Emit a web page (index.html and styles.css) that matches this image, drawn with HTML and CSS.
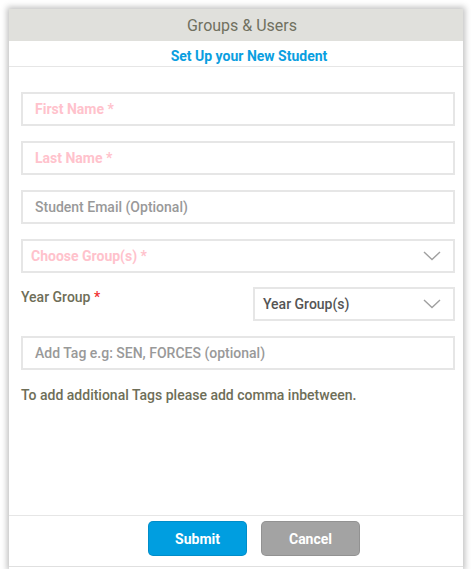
FILE: index.html
```html
<!DOCTYPE html>
<html>
<head>
<meta charset="utf-8">
<link rel="stylesheet" href="styles.css">
</head>
<body>
<div class="modal">
  <div class="header">Groups &amp; Users</div>
  <div class="subtitle">Set Up your New Student</div>
  <div class="body">
    <div class="field req">First Name *</div>
    <div class="field req">Last Name *</div>
    <div class="field">Student Email (Optional)</div>
    <div class="field select req narrowpad">Choose Group(s) *
      <svg class="chev" width="18" height="10" viewBox="0 0 18 10"><path d="M1 1 L9 8.5 L17 1" fill="none" stroke="#a0a0a0" stroke-width="1.4"/></svg>
    </div>
    <div class="yearrow">
      <div class="label">Year Group <span class="star">*</span></div>
      <div class="field select yearsel">Year Group(s)
        <svg class="chev" width="18" height="10" viewBox="0 0 18 10"><path d="M1 1 L9 8.5 L17 1" fill="none" stroke="#a0a0a0" stroke-width="1.4"/></svg>
      </div>
    </div>
    <div class="field">Add Tag e.g: SEN, FORCES (optional)</div>
    <div class="help">To add additional Tags please add comma inbetween.</div>
  </div>
  <div class="footer">
    <button class="btn submit">Submit</button>
    <button class="btn cancel">Cancel</button>
  </div>
</div>
</body>
</html>
```
FILE: styles.css
```css
html, body { margin: 0; padding: 0; background: #fff; }
body { font-family: Roboto, "Noto Sans", Arial, sans-serif; }
.modal {
  margin: 9px 0 0 9px;
  width: 454px;
  height: 560px;
  box-sizing: border-box;
  background: #fff;
  box-shadow: 0 0 6px 2px rgba(0,0,0,0.25);
  display: flex;
  flex-direction: column;
}
.header {
  height: 32px;
  background: #e0e0dc;
  color: #707060;
  font-size: 16px;
  display: flex;
  align-items: center;
  justify-content: center;
  padding-left: 12px;
}
.subtitle {
  border-bottom: 1px solid #e6e6e6;
  color: #0a9ee0;
  font-weight: 700;
  font-size: 14px;
  display: flex;
  align-items: center;
  justify-content: center;
  padding-left: 26px;
  padding-top: 4px;
  padding-bottom: 0;
  box-sizing: border-box;
  height: 26px;
}
.body {
  flex: 1;
  padding: 25px 8px 0 12px;
  display: flex;
  flex-direction: column;
}
.field {
  height: 34px;
  box-sizing: border-box;
  border: 2px solid #e6e6e6;
  padding: 0 12px;
  display: flex;
  align-items: center;
  font-size: 14px;
  font-weight: 500;
  color: #999;
  margin-bottom: 15px;
  position: relative;
}
.req { color: #ffc2cc; font-weight: 700; }
.narrowpad { padding-left: 8px; }
.select { justify-content: space-between; padding-right: 12px; }
.yearrow {
  display: flex;
  justify-content: space-between;
  align-items: flex-start;
  margin-top: -1px;
  margin-bottom: 15px;
}
.label {
  font-size: 14px;
  font-weight: 500;
  color: #6e6e58;
  padding-top: 2px;
}
.star { color: #f03030; }
.yearsel {
  width: 202px;
  margin-bottom: 0;
  margin-top: 0;
  color: #555;
  padding-left: 8px;
}
.help {
  font-size: 14px;
  font-weight: 500;
  color: #6e6e58;
  margin-top: 2px;
}
.footer {
  height: 52px;
  border-top: 1px solid #e6e6e6;
  border-bottom: 1px solid #e0e0e0;
  margin-bottom: 2px;
  display: flex;
  justify-content: center;
  gap: 14px;
  padding-top: 5px;
  padding-left: 36px;
  box-sizing: border-box;
}
.btn {
  width: 99px;
  height: 35px;
  border-radius: 5px;
  border: 1px solid rgba(0,0,0,0.1);
  color: #fff;
  font-family: Roboto, Arial, sans-serif;
  font-weight: 700;
  font-size: 14px;
}
.submit { background: #009ee0; }
.cancel { background: #a3a3a3; }
```
